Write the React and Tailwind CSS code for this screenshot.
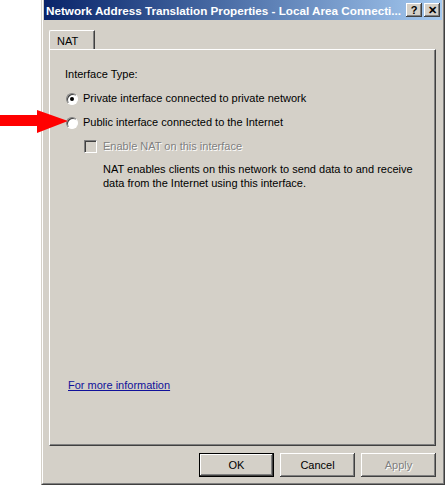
import React from "react";

const raised =
  "shadow-[inset_-1px_-1px_0_#404040,inset_1px_1px_0_#ffffff,inset_-2px_-2px_0_#808080,inset_2px_2px_0_#d4d0c8]";

const Radio = ({ checked }) => (
  <div className="w-[12px] h-[12px] rounded-full bg-white border border-t-[#808080] border-l-[#808080] border-r-white border-b-white shadow-[inset_1px_1px_0_#404040] flex items-center justify-center shrink-0">
    {checked && <div className="w-[4px] h-[4px] rounded-full bg-black" />}
  </div>
);

const Button = ({ children, isDefault, disabled }) => (
  <div
    className={`w-[75px] h-[24px] bg-[#d4d0c8] flex items-center justify-center ${
      isDefault ? "border border-black" : ""
    }`}
  >
    <div className={`w-full h-full flex items-center justify-center ${raised}`}>
      <span
        className={
          disabled
            ? "text-[#808080] [text-shadow:1px_1px_0_#ffffff]"
            : "text-black"
        }
      >
        {children}
      </span>
    </div>
  </div>
);

const TitleButton = ({ children }) => (
  <div
    className={`w-[16px] h-[14px] bg-[#d4d0c8] flex items-center justify-center text-black font-bold text-[11px] leading-none ${raised}`}
  >
    {children}
  </div>
);

export default function App() {
  return (
    <div
      className="relative w-[445px] h-[486px] bg-white flex overflow-hidden text-[11px] leading-[13px] text-black"
      style={{ fontFamily: '"Liberation Sans", Arial, sans-serif' }}
    >
      <svg
        className="absolute left-0 top-[109px]"
        width="70"
        height="25"
        viewBox="0 0 70 25"
      >
        <polygon
          points="0,6 37,6 37,1 68,12 37,24 37,17 0,17"
          fill="#ff0000"
        />
      </svg>

      <div className="ml-[41px] w-[404px] h-[485px] border-l border-r border-b border-l-[#d4d0c8] border-r-[#404040] border-b-[#404040]">
        <div className="w-full h-full border-l border-r border-b border-l-white border-r-[#808080] border-b-[#808080] bg-[#d4d0c8] pl-px pr-px flex flex-col">
          <div className="h-[20px] flex items-center pl-[2px] pr-[2px] bg-gradient-to-r from-[#0a246a] to-[#a6caf0]">
            <span className="text-white font-bold text-[11.7px] flex-1 whitespace-nowrap overflow-hidden">
              Network Address Translation Properties - Local Area Connecti...
            </span>
            <div className="flex gap-[2px]">
              <TitleButton>?</TitleButton>
              <TitleButton>✕</TitleButton>
            </div>
          </div>

          <div className="pl-[5px] pt-[10px] flex flex-col">
            <div className="flex">
              <div className="w-[46px] h-[19px] border-l border-t border-r border-l-white border-t-white border-r-[#404040] rounded-tl-[2px] shadow-[inset_-1px_0_0_#808080] flex items-center pl-[7px] pt-[2px]">
                NAT
              </div>
            </div>
            <div className="w-[387px] h-[397px] border border-l-white border-t-white border-r-[#404040] border-b-[#404040] shadow-[inset_-1px_-1px_0_#808080] flex flex-col pl-[15px] pt-[18px]">
              <div>Interface Type:</div>
              <div className="flex items-center gap-[5px] mt-[11px] pl-[1px]">
                <Radio checked />
                <span>Private interface connected to private network</span>
              </div>
              <div className="flex items-center gap-[5px] mt-[11px] pl-[1px]">
                <Radio />
                <span>Public interface connected to the Internet</span>
              </div>
              <div className="flex items-center gap-[6px] mt-[11px] pl-[19px]">
                <div className="w-[13px] h-[13px] bg-[#d4d0c8] border border-t-[#808080] border-l-[#808080] border-r-white border-b-white shadow-[inset_1px_1px_0_#404040] shrink-0" />
                <span className="text-[#808080] [text-shadow:1px_1px_0_#ffffff]">
                  Enable NAT on this interface
                </span>
              </div>
              <p className="pl-[38px] mt-[9px] leading-[14px] w-[370px]">
                NAT enables clients on this network to send data to and receive
                data from the Internet using this interface.
              </p>
              <div className="mt-auto mb-[53px] pl-[3px]">
                <span className="text-[#10109a] underline">
                  For more information
                </span>
              </div>
            </div>
            <div className="flex justify-end gap-[6px] w-[387px] mt-[7px]">
              <Button isDefault>OK</Button>
              <Button>Cancel</Button>
              <Button disabled>Apply</Button>
            </div>
          </div>
        </div>
      </div>
    </div>
  );
}
